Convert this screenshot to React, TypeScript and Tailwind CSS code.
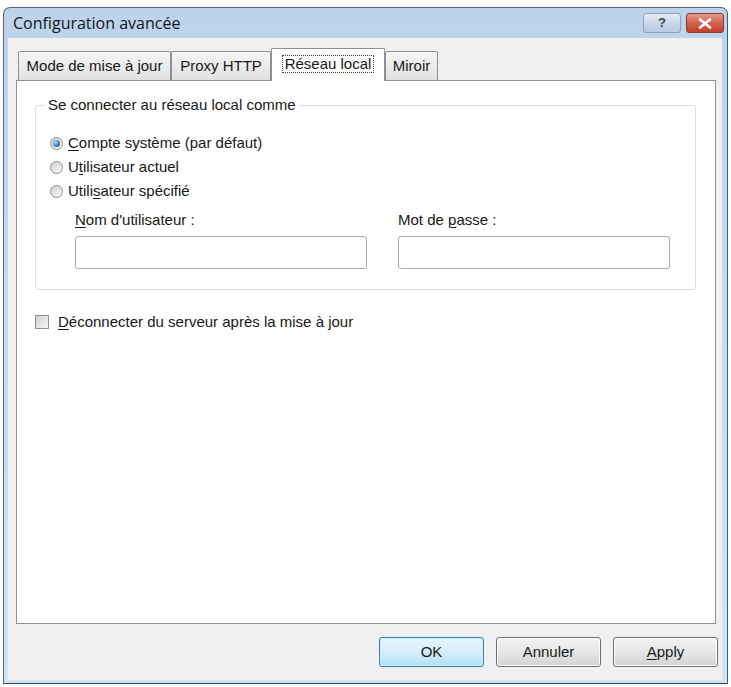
import React from "react";

const U = ({ children }: { children: React.ReactNode }) => (
  <span className="underline underline-offset-[2px] decoration-1">{children}</span>
);

interface RadioProps {
  checked?: boolean;
  children: React.ReactNode;
}

const Radio: React.FC<RadioProps> = ({ checked, children }) => (
  <div className="flex items-center h-[18px]">
    <span className="w-[13px] h-[13px] rounded-full border border-[#8f8f8f] bg-gradient-to-br from-[#cfcfcf] to-[#fbfbfb] flex items-center justify-center shrink-0">
      {checked && (
        <span className="w-[7px] h-[7px] rounded-full bg-[radial-gradient(circle_at_35%_35%,#a6dcfb,#2467b3_70%)]" />
      )}
    </span>
    <span className="ml-[5px]">{children}</span>
  </div>
);

const Tab = ({ label, width }: { label: string; width: string }) => (
  <div
    className={`${width} h-[29px] border border-b-0 border-[#8c8f96] rounded-t-[2px] bg-gradient-to-b from-[#f5f5f5] to-[#e2e2e2] flex items-center justify-center`}
  >
    {label}
  </div>
);

const Button = ({ children, primary }: { children: React.ReactNode; primary?: boolean }) => (
  <button
    className={
      primary
        ? "w-[105px] h-[30px] rounded-[3px] border border-[#3c7fb1] bg-gradient-to-b from-[#e8f5fc] via-[#d5eefb] to-[#b2def8] shadow-[inset_0_0_0_1px_#c9ecfd]"
        : "w-[105px] h-[30px] rounded-[3px] border border-[#707070] bg-gradient-to-b from-[#f3f3f3] via-[#e6e6e6] to-[#d3d3d3] shadow-[inset_0_0_0_1px_#fcfcfc]"
    }
  >
    {children}
  </button>
);

export default function App() {
  return (
    <div className="w-[731px] h-[687px] bg-white pt-[7px] pl-[3px] font-['Liberation_Sans',Arial,sans-serif] text-[15px] leading-[18px] text-[#181818]">
      <div className="w-[725px] h-[677px] flex flex-col rounded-t-[7px] border border-[#5a6470] border-r-[#2c6876] border-b-[#1e4a57] bg-gradient-to-b from-[#bcd3eb] via-[#c7dbef] to-[#d2e3f3]">
        {/* title bar */}
        <div className="h-[30px] flex items-center pl-[9px] pr-[3px]">
          <span className="font-['Open_Sans',sans-serif] text-[16px] text-[#101820]">
            Configuration avancée
          </span>
          <div className="ml-auto flex gap-[5px]">
            <div className="w-[38px] h-[20px] rounded-[3px] border border-[#8fa1b5] bg-gradient-to-b from-[#e4ecf5] via-[#c9d7e6] to-[#b8cbe0] flex items-center justify-center text-[13px] font-bold text-[#38424d]">
              ?
            </div>
            <div className="w-[38px] h-[20px] rounded-[3px] border border-[#8b3a2e] bg-gradient-to-b from-[#e59a8a] via-[#d4614d] to-[#c1402a] flex items-center justify-center">
              <svg width="14" height="11" viewBox="0 0 14 11">
                <path d="M2 1.5 L12 9.5 M12 1.5 L2 9.5" stroke="#fff" strokeWidth="2.6" strokeLinecap="round" />
              </svg>
            </div>
          </div>
        </div>

        {/* body */}
        <div className="ml-[4px] mr-[5px] mb-[3px] h-[642px] bg-[#f0f0f0] flex flex-col">
          <div className="pt-[9px] pl-[10px] flex items-end h-[42px]">
            <Tab label="Mode de mise à jour" width="w-[153px]" />
            <Tab label="Proxy HTTP" width="w-[100px]" />
            <div className="relative z-10 -mb-px w-[114px] h-[33px] border border-b-0 border-[#8c8f96] rounded-t-[2px] bg-white flex items-start justify-center pt-[6px]">
              <span className="border border-dotted border-[#444] px-[2px] leading-[16px]">Réseau local</span>
            </div>
            <Tab label="Miroir" width="w-[53px]" />
          </div>

          {/* panel */}
          <div className="ml-[8px] w-[700px] h-[544px] border border-[#8c8f96] bg-white">
            <fieldset className="ml-[18px] mt-[15px] w-[661px] border border-[#d5dfe5] rounded-[3px] p-0">
              <legend className="ml-[9px] px-[3px]">Se connecter au réseau local comme</legend>
              <div className="pl-[14px] pt-[20px] pb-[20px] flex flex-col">
                <div className="flex flex-col gap-[6px]">
                  <Radio checked>
                    <U>C</U>ompte système (par défaut)
                  </Radio>
                  <Radio>
                    U<U>t</U>ilisateur actuel
                  </Radio>
                  <Radio>
                    Utili<U>s</U>ateur spécifié
                  </Radio>
                </div>
                <div className="mt-[11px] ml-[25px] grid grid-cols-[292px_272px] gap-x-[31px] gap-y-[7px]">
                  <div>
                    <U>N</U>om d'utilisateur :
                  </div>
                  <div>
                    Mot de <U>p</U>asse :
                  </div>
                  <div className="h-[33px] rounded-[3px] border border-[#a9abb0] bg-white" />
                  <div className="h-[33px] rounded-[3px] border border-[#a9abb0] bg-white" />
                </div>
              </div>
            </fieldset>

            <div className="mt-[23px] ml-[18px] flex items-center h-[18px]">
              <span className="w-[14px] h-[14px] border border-[#8f8f8f] bg-gradient-to-br from-[#d0d0d0] to-[#f8f8f8] shrink-0" />
              <span className="ml-[9px]">
                <U>D</U>éconnecter du serveur après la mise à jour
              </span>
            </div>
          </div>

          {/* buttons */}
          <div className="mt-[13px] pr-[4px] flex justify-end gap-[12px]">
            <Button primary>OK</Button>
            <Button>Annuler</Button>
            <Button>
              <U>A</U>pply
            </Button>
          </div>
        </div>
      </div>
    </div>
  );
}
